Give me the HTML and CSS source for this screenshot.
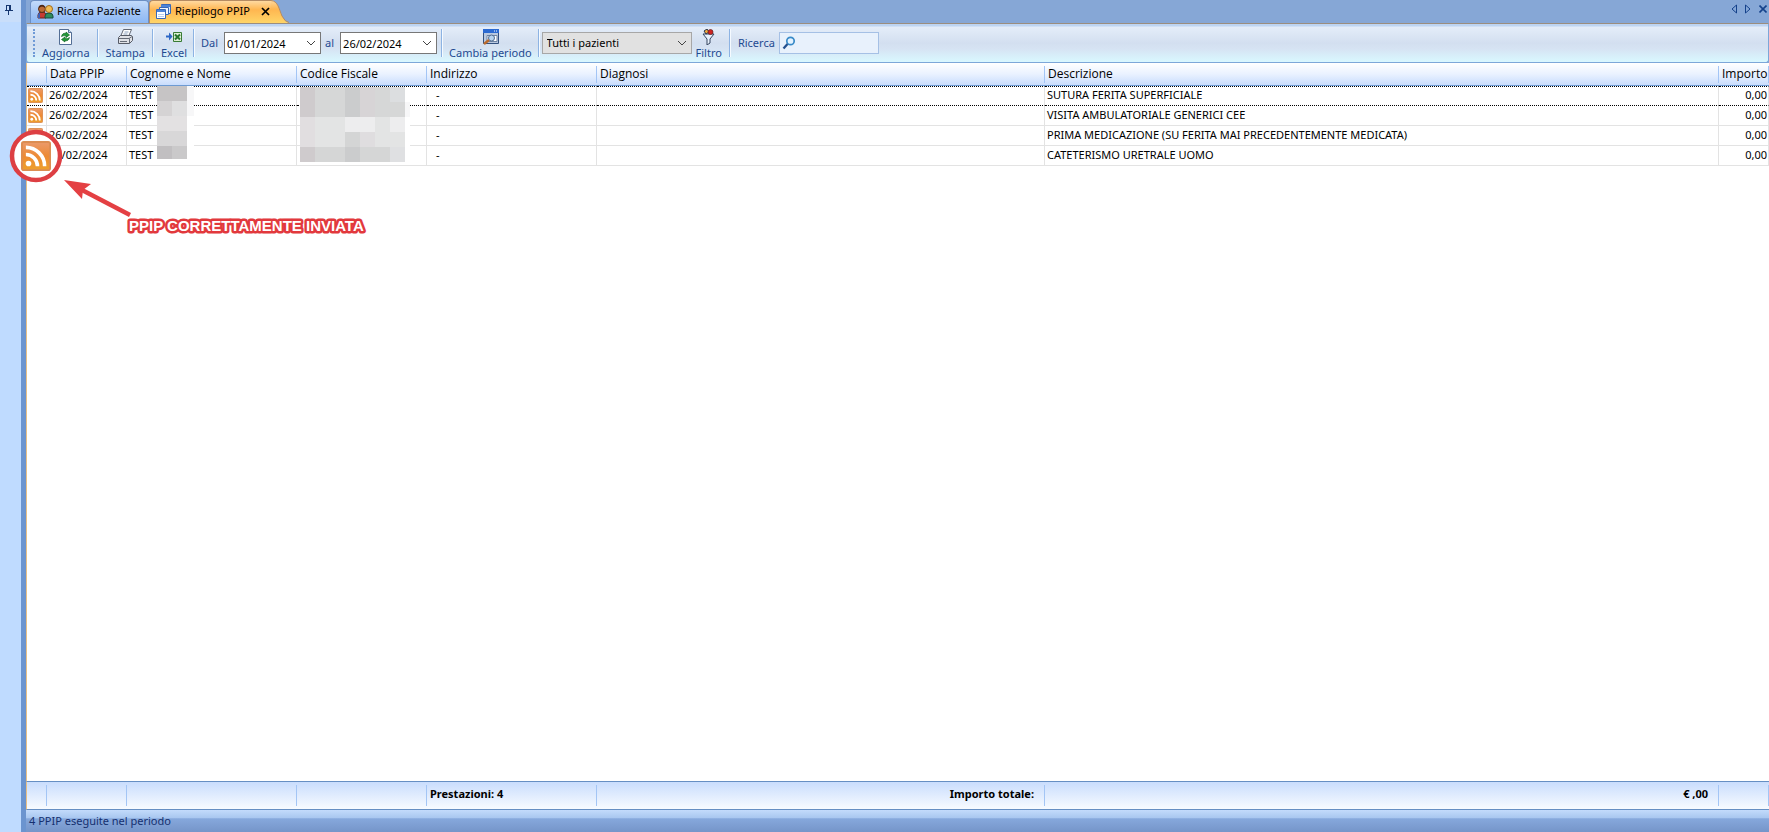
FILE: index.html
```html
<!DOCTYPE html>
<html lang="it">
<head>
<meta charset="utf-8">
<title>Riepilogo PPIP</title>
<link rel="stylesheet" href="styles.css">
</head>
<body>
<svg class="defs" aria-hidden="true">
  <defs>
    <linearGradient id="orange" x1="0" y1="0" x2="0" y2="1"><stop offset="0" stop-color="#eb9a6c"/><stop offset=".5" stop-color="#ed8a35"/><stop offset="1" stop-color="#eea02c"/></linearGradient>
    <linearGradient id="tabfill" x1="0" y1="0" x2="0" y2="1"><stop offset="0" stop-color="#ffd9a0"/><stop offset=".4" stop-color="#ffb650"/><stop offset="1" stop-color="#ffd568"/></linearGradient>
    <symbol id="rss" viewBox="0 0 16 16">
      <rect x=".5" y=".5" width="15" height="15" rx="1" fill="url(#orange)" stroke="#dc8d52"/>
      <circle cx="4" cy="12" r="1.5" fill="#fff"/>
      <path d="M2.6 7.2a6.2 6.2 0 0 1 6.2 6.2M2.6 3.4a10 10 0 0 1 10 10" fill="none" stroke="#fff" stroke-width="1.9"/>
    </symbol>
  </defs>
</svg>
<div class="app">
  <aside class="dock">
    <button class="pin" aria-label="Blocca pannello"><svg width="9" height="11" viewBox="0 0 9 11"><path d="M2.500 1v5M2 1.500h5M6.500 1v5M5.500 1v5M1 6.500h8M4.500 7v4" fill="none" stroke="#15366f"/></svg></button>
  </aside>
  <main class="main">
    <nav class="tabs">
      <button class="tab">
        <svg width="17" height="15" viewBox="0 0 17 15"><path d="M1 14v-3q0-3 4-3t4 3v3z" fill="#c63b32" stroke="#6a231c"/><path d="M1 14v-3q0-2 2-2.500V14z" fill="#3b62b8"/><circle cx="5" cy="5" r="3.500" fill="#bb6a35" stroke="#542b15"/><path d="M2 4q3-3 6 0q-1-4-4-3t-2 3" fill="#4a2717"/><path d="M8 14v-2q0-3 4-3t4 3v2z" fill="#2f8c5d" stroke="#174f42"/><circle cx="12" cy="5" r="3.500" fill="#f2bd54" stroke="#9d6b1c"/></svg>
        Ricerca Paziente
      </button>
      <button class="tab active">
        <svg width="15" height="15" viewBox="0 0 15 15"><path d="M5.500.5h9v9h-9z" fill="#d9e8fb" stroke="#3868b7"/><path d="M5 1h9v2H5z" fill="#4d84d8"/><path d="M3.500 3.500h9v7h-9z" fill="#edf5ff" stroke="#3868b7"/><path d="M.5 5.500h9v9h-9z" fill="#fff" stroke="#3868b7"/><path d="M1 6h8v2H1z" fill="#4d84d8"/><path d="M2 10.500h6M2 12.500h6" stroke="#b7cdee"/></svg>
        <span>Riepilogo PPIP</span>
        <svg class="close" width="9" height="9" viewBox="0 0 9 9"><path d="M1 1l7 7M8 1L1 8" stroke="#000" stroke-width="1.700"/></svg>
      </button>
      <svg class="slant" width="18" height="23" viewBox="0 0 18 23"><path d="M0 0C7 1 8 9 11 16q3 6 7 7H0z" fill="url(#tabfill)"/><path d="M0 .5C7 1 8 9 11 16q3 6 7 6.500" fill="none" stroke="#b58b62"/></svg>
      <div class="tabnav">
        <button aria-label="Precedente"><svg width="6" height="10" viewBox="0 0 6 10"><path d="M5.500 1v8L1 5z" fill="none" stroke="#15428b"/></svg></button>
        <button aria-label="Successiva"><svg width="6" height="10" viewBox="0 0 6 10"><path d="M.5 1v8L5 5z" fill="none" stroke="#15428b"/></svg></button>
        <button aria-label="Chiudi"><svg width="8" height="8" viewBox="0 0 8 8"><path d="M.5.5l7 7M7.500.5l-7 7" stroke="#15428b" stroke-width="1.600"/></svg></button>
      </div>
    </nav>
    <div class="toolbar">
      <span class="grip"></span>
      <button class="tool">
        <svg width="13" height="16" viewBox="0 0 13 16"><path d="M.5.5h9l3 3v12H.5z" fill="#fff" stroke="#536e95"/><path d="M9.500.5v3h3" fill="#c8d7ec" stroke="#536e95"/><path d="M2.500 7.500q1-4 4.500-3V3l3.500 3L7 8.500V7Q5 6 2.500 7.500zM10.500 8.500q-1 4-4.500 3V13L2.500 10.500 6 8v1.500q2 1 4.500-1z" fill="#219a36" stroke="#126524" stroke-width=".7"/></svg>
        Aggiorna
      </button>
      <span class="sep"></span>
      <button class="tool">
        <svg width="17" height="16" viewBox="0 0 17 16"><path d="M6.500.5h8l-3 7h-8z" fill="#fff" stroke="#626875"/><path d="M7.500 3h4M6.500 5h4" stroke="#8ba0bb"/><path d="M1.500 8.500l2-2h11l1 1v4l-3 3h-11z" fill="#dfe1e6" stroke="#565b66"/><path d="M2 9.500h10l3-2M12.500 9.500v5M3 12.500h7" fill="none" stroke="#656b76"/></svg>
        Stampa
      </button>
      <span class="sep"></span>
      <button class="tool">
        <svg width="17" height="16" viewBox="0 0 17 16"><path d="M0 6.500h3V3.500l3.500 4-3.500 4V8.500H0z" fill="#2d67c6"/><path d="M7.500 3.500h8v9h-8z" fill="#dff0d5" stroke="#397b35"/><path d="M9 5.500l5 5M14 5.500l-5 5" stroke="#28752d" stroke-width="2"/></svg>
        Excel
      </button>
      <span class="sep before-label"></span>
      <label class="lbl" for="dal">Dal</label>
      <span class="combo"><input id="dal" value="01/01/2024"><svg width="10" height="6" viewBox="0 0 10 6"><path d="M1 1l4 4 4-4" fill="none" stroke="#444"/></svg></span>
      <label class="lbl" for="al">al</label>
      <span class="combo"><input id="al" value="26/02/2024"><svg width="10" height="6" viewBox="0 0 10 6"><path d="M1 1l4 4 4-4" fill="none" stroke="#444"/></svg></span>
      <span class="sep after-field"></span>
      <button class="tool">
        <svg width="17" height="16" viewBox="0 0 17 16"><path d="M1.500.5h15v14h-15z" fill="#b9c9e0" stroke="#33517f"/><path d="M1 0h16v4H1z" fill="#2b6ad2"/><path d="M12 2h1M14 2h1" stroke="#fff"/><path d="M5 6.500h10v6H5z" fill="#fff" stroke="#6f84a3"/><circle cx="9.500" cy="9" r="3" fill="#b6d3ef" stroke="#536d91"/><path d="M7 11l-5 4" stroke="#b96a2d" stroke-width="2.500"/></svg>
        Cambia periodo
      </button>
      <span class="sep before-field"></span>
      <span class="select"><select aria-label="Pazienti"><option>Tutti i pazienti</option></select><svg width="10" height="6" viewBox="0 0 10 6"><path d="M1 1l4 4 4-4" fill="none" stroke="#444"/></svg></span>
      <button class="tool filter">
        <svg width="13" height="16" viewBox="0 0 13 16"><path d="M1 5h11L8 10v4l-3 2v-6z" fill="#e7f1fc" stroke="#34455f"/><path d="M2 2l3-2 2 3-3 2z" fill="#efa83b" stroke="#27354d"/><circle cx="8.500" cy="3" r="2.500" fill="#cf2422" stroke="#66211f" stroke-width=".7"/></svg>
        Filtro
      </button>
      <span class="sep"></span>
      <label class="lbl" for="q">Ricerca</label>
      <span class="search"><svg width="14" height="14" viewBox="0 0 14 14"><circle cx="8.500" cy="5" r="3.700" fill="#e3f2ff" stroke="#388ac8" stroke-width="1.700"/><path d="M5.500 8L1.500 12.500" stroke="#23508f" stroke-width="2.300"/></svg><input id="q"></span>
    </div>
    <section class="grid">
      <table>
        <colgroup><col class="c0"><col class="c1"><col class="c2"><col class="c3"><col class="c4"><col class="c5"><col class="c6"><col class="c7"></colgroup>
        <thead><tr><th></th><th>Data PPIP</th><th>Cognome e Nome</th><th>Codice Fiscale</th><th>Indirizzo</th><th>Diagnosi</th><th>Descrizione</th><th class="num">Importo</th></tr></thead>
        <tbody>
          <tr class="focus"><td class="icon"><svg class="rss"><use href="#rss"/></svg></td><td>26/02/2024</td><td>TEST</td><td></td><td class="dash">-</td><td></td><td>SUTURA FERITA SUPERFICIALE</td><td class="num">0,00</td></tr>
          <tr><td class="icon"><svg class="rss"><use href="#rss"/></svg></td><td>26/02/2024</td><td>TEST</td><td></td><td class="dash">-</td><td></td><td>VISITA AMBULATORIALE GENERICI CEE</td><td class="num">0,00</td></tr>
          <tr><td class="icon"><svg class="rss"><use href="#rss"/></svg></td><td>26/02/2024</td><td>TEST</td><td></td><td class="dash">-</td><td></td><td>PRIMA MEDICAZIONE (SU FERITA MAI PRECEDENTEMENTE MEDICATA)</td><td class="num">0,00</td></tr>
          <tr><td class="icon"><svg class="rss"><use href="#rss"/></svg></td><td>26/02/2024</td><td>TEST</td><td></td><td class="dash">-</td><td></td><td>CATETERISMO URETRALE UOMO</td><td class="num">0,00</td></tr>
        </tbody>
      </table>
      <svg class="mask name" width="37" height="74" viewBox="0 0 37 74" shape-rendering="crispEdges"><path d="M0 0h37v74H0z" fill="#fff"/><path d="M0 0h30v15H0z" fill="#c6c4c5"/><path d="M0 15h15v15H0z" fill="#d5d3d4"/><path d="M15 15h15v15H15z" fill="#dfdfe0"/><path d="M30 0h7v30h-7z" fill="#f7f7f8"/><path d="M0 30h30v15H0z" fill="#e3e1e2"/><path d="M0 45h30v15H0z" fill="#d8d7d8"/><path d="M0 60h15v13H0z" fill="#c1bfc1"/><path d="M15 60h15v13H15z" fill="#cac9ca"/></svg>
      <svg class="mask code" width="110" height="75" viewBox="0 0 110 75" shape-rendering="crispEdges"><path d="M0 0h110v75H0z" fill="#fff"/><path d="M0 0h105v30H0z" fill="#d6d7d7"/><path d="M0 0h15v30H0z" fill="#cfcbcd"/><path d="M45 0h15v30H45z" fill="#cbcccd"/><path d="M60 0h15v30H60z" fill="#d7d4d6"/><path d="M90 0h15v15H90z" fill="#dcdee0"/><path d="M105 15h5v15h-5z" fill="#f7f7f8"/><path d="M0 30h105v30H0z" fill="#e3e4e4"/><path d="M0 30h15v30H0z" fill="#e1dee0"/><path d="M45 30h30v15H45zM90 30h15v15H90z" fill="#ededee"/><path d="M45 45h15v15H45z" fill="#d4d5d5"/><path d="M60 45h15v15H60z" fill="#dfdddf"/><path d="M0 60h105v15H0z" fill="#d5d6d6"/><path d="M0 60h15v15H0z" fill="#cfcbcd"/><path d="M45 60h15v15H45z" fill="#cbcccd"/><path d="M90 60h15v15H90z" fill="#dfe0e2"/></svg>
    </section>
    <div class="totals">
      <span></span><span></span><span></span><span></span><span>Prestazioni: 4</span><span class="right">Importo totale:</span><span class="right">€ ,00</span><span></span>
    </div>
    <footer class="status">4 PPIP eseguite nel periodo</footer>
  </main>
  <svg class="note" width="380" height="120" viewBox="0 0 380 120">
    <circle cx="36" cy="36" r="24" fill="#fff" stroke="#dd3f43" stroke-width="4.500"/>
    <use href="#rss" x="21" y="21" width="30" height="30"/>
    <path d="M130 95L82 70" stroke="#e44043" stroke-width="4.500"/><path d="M64 60l27 4-8 6-1 9z" fill="#e44043"/>
    <text x="129" y="111">PPIP CORRETTAMENTE INVIATA</text>
  </svg>
</div>
</body>
</html>
```
FILE: styles.css
```css
* { box-sizing: border-box; }
body { margin: 0; font: 11px/16px "Noto Sans", sans-serif; color: #000; }
button, input, select { font: inherit; color: inherit; margin: 0; padding: 0; border: 0; background: none; }
svg { flex: none; }
.defs { position: absolute; width: 0; height: 0; }
.app { position: relative; display: flex; min-height: 100vh; overflow: hidden; background: #bfdbff; }
.dock { width: 21px; background: #bfdbff; }
.pin { display: block; height: 22px; width: 21px; padding: 0 4px 4px 0; background: #c9defa; line-height: 0; }
.main { flex: 1; min-width: 0; display: flex; flex-direction: column; border-left: 5px solid #6b94cf; background: #86a7d6; }
.tabs { display: flex; height: 23px; padding-left: 4px; }
.tab { display: flex; align-items: center; gap: 3px; width: 119px; padding: 0 0 2px 6px; border: 1px solid #6c8fc4; border-bottom: 0; border-radius: 4px 4px 0 0; background: linear-gradient(#c3dbfb, #a5c6f5 50%, #8cb8f5); white-space: nowrap; }
.tab.active { width: 122px; gap: 4px; border-color: #b58b62; border-right: 0; border-radius: 4px 0 0 0; background: linear-gradient(#ffd9a0, #ffb650 40%, #ffd568); }
.close { margin-left: 7px; }
.tabnav { display: flex; align-items: center; gap: 8px; margin-left: auto; padding: 0 2px 5px 0; line-height: 0; }
.toolbar { display: flex; align-items: center; height: 40px; padding: 0 6px; border: 1px solid #7da7d8; border-top: 1px solid #9b8d7f; border-radius: 0 0 3px 3px; background: linear-gradient(#bdd4f2 0, #bdd4f2 2px, #e4edf9 3px, #d3dff0 50%, #d6e3f3 65%, #d9f8ff); color: #1e4a91; }
.grip { height: 28px; margin-right: 7px; border-left: 2px dotted #6f9ad6; }
.tool { display: flex; flex-direction: column; align-items: center; height: 32px; padding-top: 2px; white-space: nowrap; }
.sep { width: 2px; height: 28px; margin: 0 7px; border-left: 1px solid #8db3e3; border-right: 1px solid #f5faff; }
.before-label { margin: 0 6px; }
.after-field { margin: 0 6px 0 0; }
.before-field { margin: 0 2px 0 6px; }
.combo, .select, .search { display: flex; align-items: center; width: 97px; height: 22px; margin: 0 4px 0 6px; padding: 0 4px 0 2px; border: 1px solid #777; background: #fff; color: #000; }
.combo input, .select select, .search input { flex: 1; min-width: 0; height: 18px; appearance: none; outline: 0; }
.select { width: 150px; margin: 0 4px 0 0; padding-left: 4px; border-color: #a7a7a7; background: #e1e1e1; }
.search { width: 100px; margin-left: 4px; border-color: #a5c0e5; background: #e8f1fc; }
.grid { position: relative; flex: 1; background: #fff; border-left: 1px solid #e8bf85; }
table { width: 100%; table-layout: fixed; border-collapse: separate; border-spacing: 0; }
.c0 { width: 20px; } .c1 { width: 80px; } .c2 { width: 170px; } .c3 { width: 130px; } .c4 { width: 170px; } .c5 { width: 448px; } .c7 { width: 50px; }
th { height: 23px; padding: 0 3px; border-bottom: 1px solid #6e9bd3; background: linear-gradient(90deg, transparent calc(100% - 1px), #a3c5f5 0) 0 3px / 100% 17px no-repeat, linear-gradient(#fff, #eaf2ff 50%, #c9ddfd); font: 12px/16px "Open Sans", sans-serif; text-align: left; white-space: nowrap; }
td { height: 20px; padding: 0 2px 2px; border-right: 1px solid #e3e3e3; border-bottom: 1px solid #e3e3e3; line-height: 14px; white-space: nowrap; }
.focus td { border-top: 1px dotted #000; border-bottom: 1px dotted #000; }
td.num { text-align: right; padding-right: 1px; }
td.dash { padding-left: 9px; }
td.icon { padding: 0 0 1px 1px; }
.rss { display: block; width: 15px; height: 15px; }
.mask { position: absolute; }
.name { left: 130px; top: 23px; }
.code { left: 273px; top: 24px; }
.totals { display: grid; grid-template-columns: 20px 80px 170px 130px 170px 448px 1fr 50px; height: 29px; border-left: 1px solid #e8bf85; border-top: 1px solid #668fc3; border-bottom: 1px solid #668fc3; background: linear-gradient(#c9ddfd, #f8fbff); font-weight: 700; }
.totals span { margin: 3px 0; padding: 1px 3px; border-right: 1px solid #a3c5f5; white-space: nowrap; }
.totals .right { padding-right: 10px; text-align: right; }
.status { height: 22px; padding: 3px; background: linear-gradient(#c3dbfb 0, #a9c7f0 35%, #86a8dc 40%, #7595c9); color: #15306f; }
.note { position: absolute; left: 0; top: 120px; pointer-events: none; }
.note text { font: 700 15px "Liberation Sans", sans-serif; fill: #fff; stroke: #e2393d; stroke-width: 5px; stroke-linejoin: round; paint-order: stroke; }
```
